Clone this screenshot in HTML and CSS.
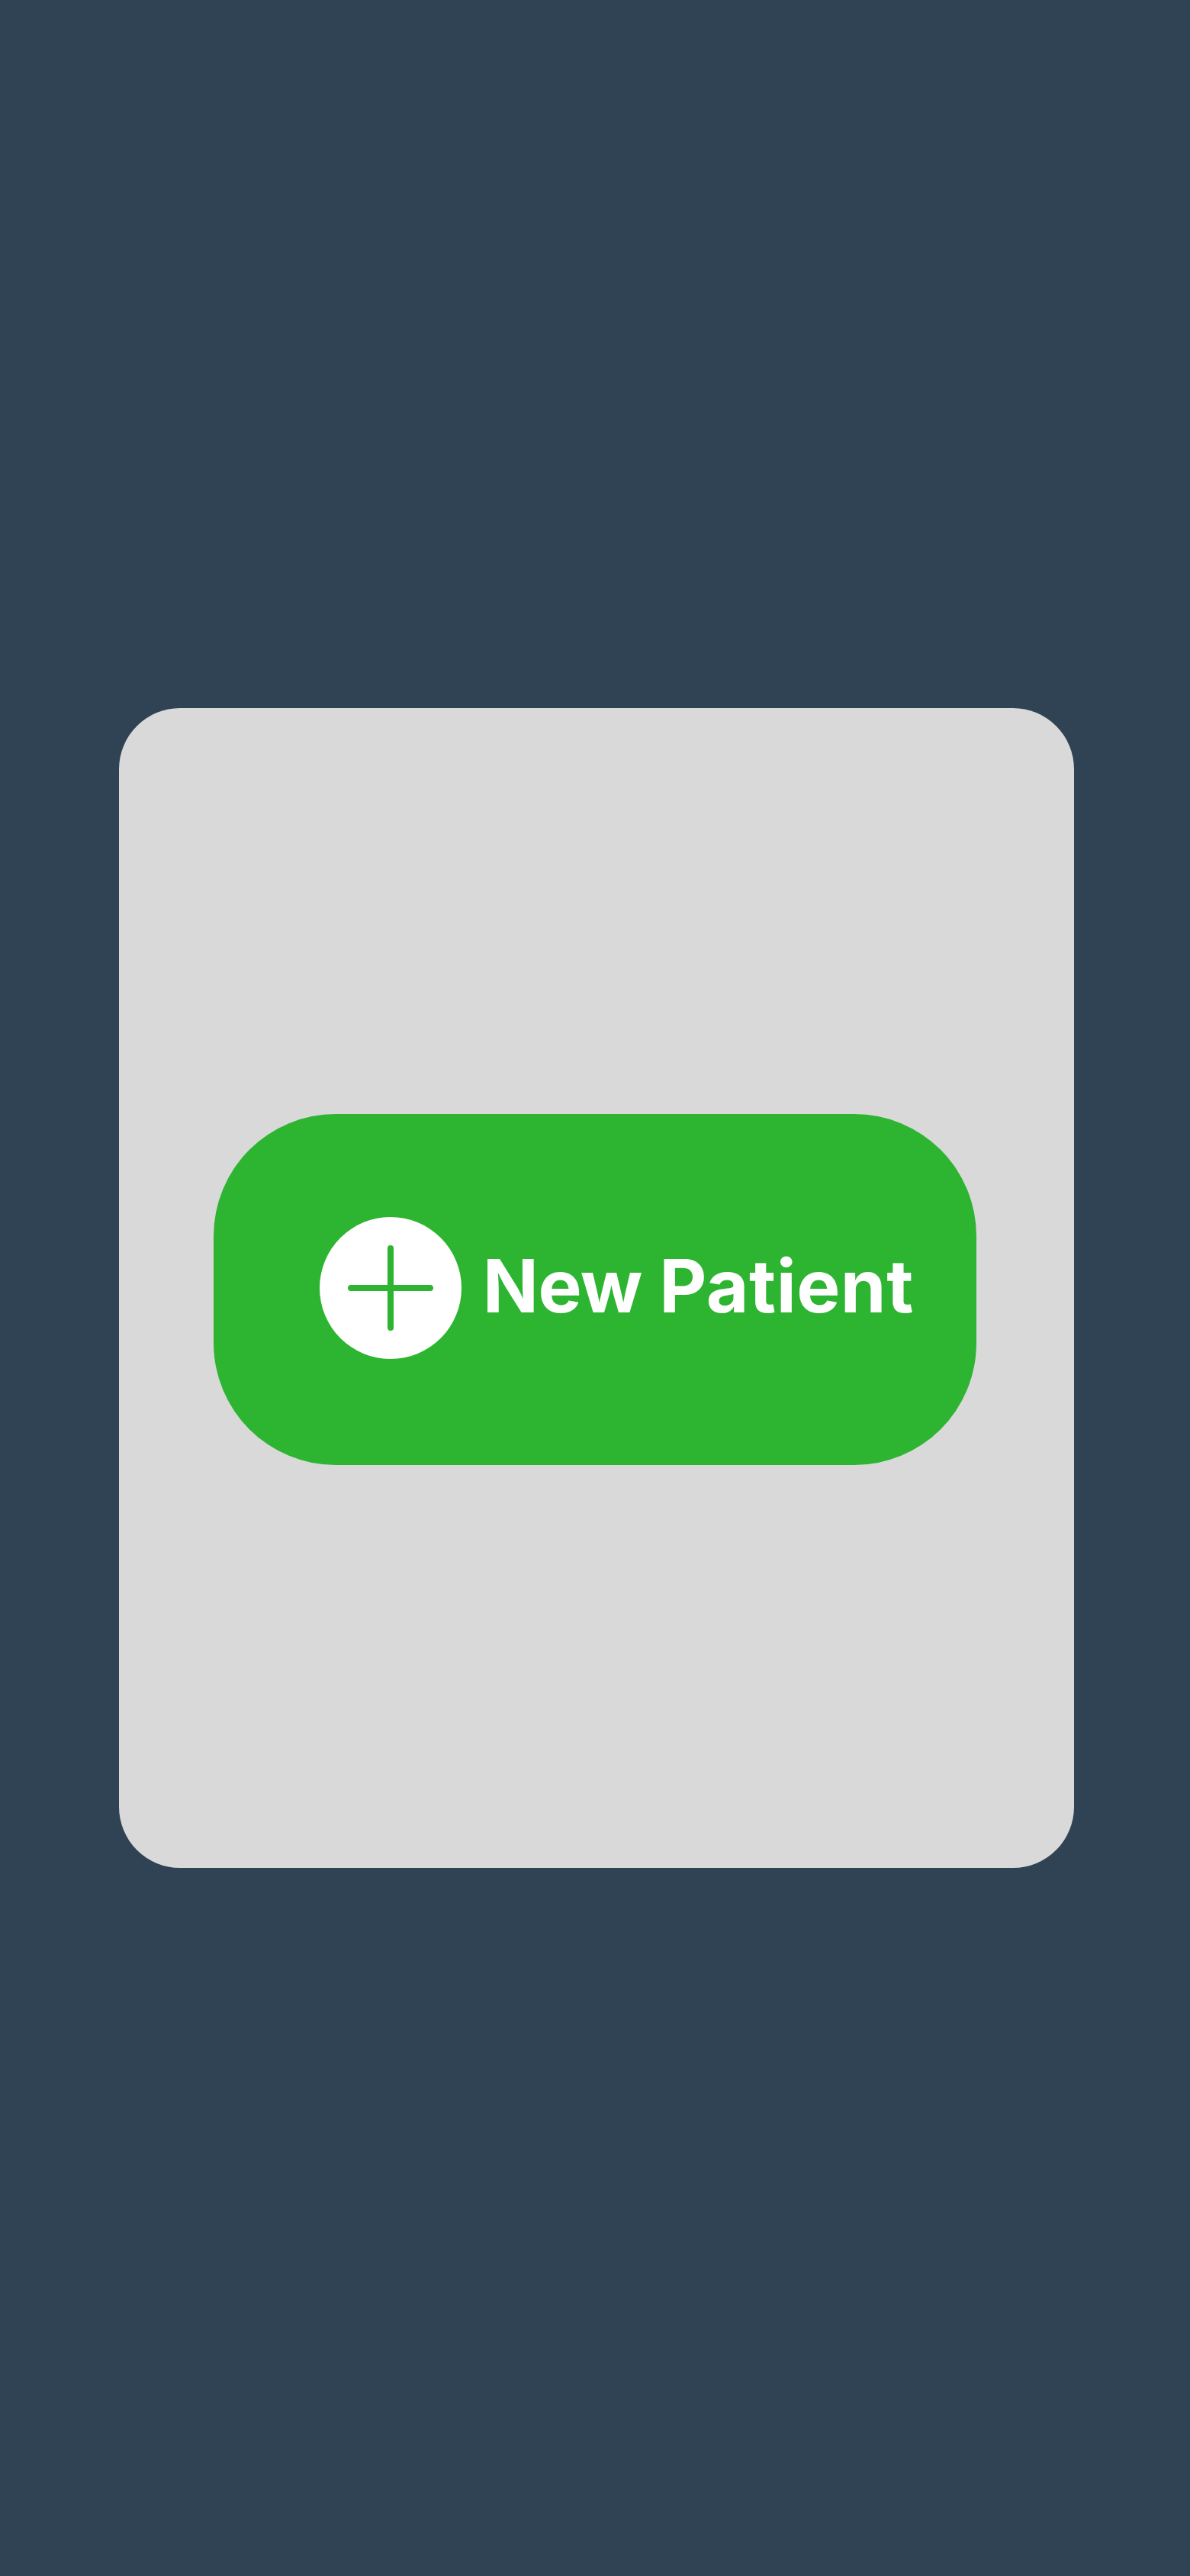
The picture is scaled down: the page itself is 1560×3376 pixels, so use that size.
FILE: index.html
```html
<!DOCTYPE html>
<html lang="en">
<head>
<meta charset="utf-8">
<title>New Patient</title>
<link rel="stylesheet" href="styles.css">
</head>
<body>
<main class="card">
<button class="new-patient" type="button">
<svg class="icon" viewBox="0 0 186 186" aria-hidden="true"><circle cx="93" cy="93" r="93" fill="#fff"/><path d="M93 41V145M41 93H145" stroke="#2db531" stroke-width="8" stroke-linecap="round"/></svg>
<span class="label">New <span class="noun">Patient</span></span>
</button>
</main>
</body>
</html>
```
FILE: styles.css
```css
* { box-sizing: border-box; }
body {
  margin: 0;
  height: 3376px;
  padding: 928px 152px 928px 156px;
  background: #304354;
  font-family: Inter, sans-serif;
}
.card {
  height: 1520px;
  padding: 532px 128px 0 124px;
  border-radius: 80px;
  background: #d9d9d9;
}
.new-patient {
  display: flex;
  align-items: center;
  gap: 27.7px;
  width: 1000px;
  height: 460px;
  padding: 0 0 4px 139px;
  border: 0;
  border-radius: 160px;
  background: #2db531;
  color: #fff;
  font: 700 96px/116px Inter, sans-serif;
}
.icon { flex: none; width: 186px; height: 186px; }
.label {
  padding-bottom: 6px;
  letter-spacing: -0.45px;
  white-space: nowrap;
}
.noun { letter-spacing: 0.5px; }
```
